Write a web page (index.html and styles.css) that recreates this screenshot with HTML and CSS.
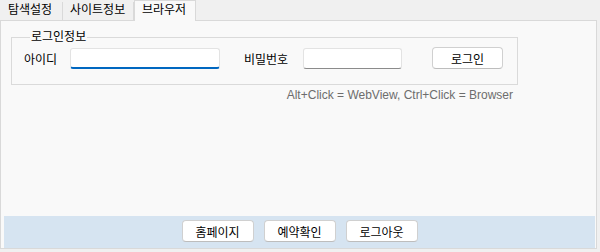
FILE: index.html
```html
<!DOCTYPE html>
<html lang="ko">
<head>
  <meta charset="UTF-8" />
  <title>브라우저 설정</title>
  <link rel="stylesheet" href="styles.css">
</head>
<body>
  <div class="tabs">
    <div class="tab">탐색설정</div>
    <div class="tab">사이트정보</div>
    <div class="tab active">브라우저</div>
  </div>

  <div class="panel">
    <fieldset class="group">
      <legend>로그인정보</legend>
      <div class="row">
        <label class="lbl-id">아이디</label>
        <input class="field field-id" type="text">
        <label class="lbl-pw">비밀번호</label>
        <input class="field field-pw" type="password">
        <button class="btn btn-login">로그인</button>
      </div>
    </fieldset>

    <div class="hint">Alt+Click = WebView, Ctrl+Click = Browser</div>

    <div class="footer">
      <button class="btn">홈페이지</button>
      <button class="btn">예약확인</button>
      <button class="btn">로그아웃</button>
    </div>
  </div>
</body>
</html>
```

FILE: styles.css
```css
* { box-sizing: border-box; margin: 0; padding: 0; }
body {
  background: #f0f0f0;
  font-family: "Liberation Sans", "Noto Sans CJK KR", sans-serif;
  font-size: 12px;
  color: #000;
  width: 600px;
  height: 252px;
  overflow: hidden;
}

.tabs {
  display: flex;
  height: 20px;
  align-items: flex-end;
  padding-left: 1px;
}
.tab {
  height: 18px;
  line-height: 17px;
  padding: 0 7px;
  border-right: 1px solid #d9d9d9;
  color: #000;
}
.tab:nth-child(1) { width: 62px; }
.tab:nth-child(2) { width: 71px; }
.tab.active {
  width: 62px;
  height: 21px;
  margin-bottom: -1px;
  background: #f9f9f9;
  border: 1px solid #d9d9d9;
  border-bottom: none;
  line-height: 19px;
  position: relative;
  z-index: 1;
}

.panel {
  width: 597px;
  height: 229px;
  background: #f9f9f9;
  border: 1px solid #d9d9d9;
  display: flex;
  flex-direction: column;
}

.group {
  margin: 9px 0 0 10px;
  width: 507px;
  height: 55px;
  border: 1px solid #dadada;
  padding: 3px 0 0 12px;
}
.group legend {
  margin-left: 6px;
  padding: 0 1px;
  line-height: 14px;
}

.row {
  display: flex;
  align-items: center;
}
.lbl-id { width: 46px; }
.lbl-pw { margin-left: 24px; width: 59px; }

.field {
  height: 21px;
  background: #fff;
  border: 1px solid #e3e3e3;
  border-bottom: 1px solid #8b8b8b;
  border-radius: 3px;
  outline: none;
}
.field-id {
  width: 150px;
  border-bottom: 2px solid #0067c0;
}
.field-pw { width: 99px; }

.btn {
  font-family: inherit;
  font-size: 12px;
  width: 72px;
  height: 22px;
  background: #fff;
  border: 1px solid #d0d0d0;
  border-bottom-color: #bdbdbd;
  border-radius: 4px;
  color: #000;
}
.btn-login { margin-left: 30px; width: 71px; }

.hint {
  color: #6d6d6d;
  text-align: right;
  width: 512px;
  margin-top: 3px;
  line-height: 14px;
}

.footer {
  margin: auto 1px 0 3px;
  height: 32px;
  background: #d6e4f1;
  display: flex;
  justify-content: center;
  gap: 10px;
  padding-top: 4px;
}
```
